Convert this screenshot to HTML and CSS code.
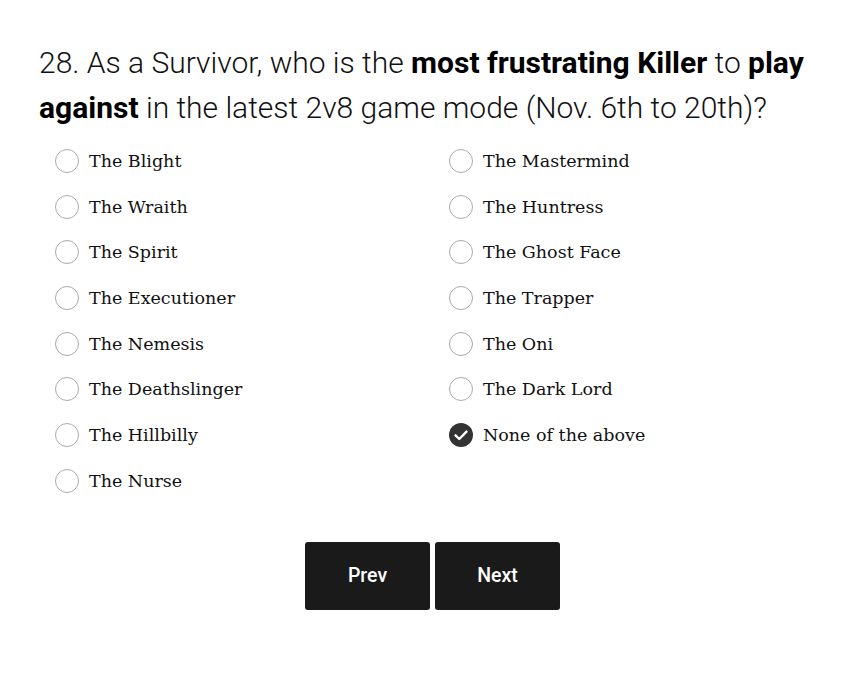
FILE: index.html
```html
<!DOCTYPE html>
<html>
<head>
<meta charset="utf-8">
<link rel="stylesheet" href="styles.css">
</head>
<body>
<div class="page">
  <h1 class="question">28. As a Survivor, who is the <b>most frustrating Killer</b> to <b>play against</b> in the latest 2v8 game mode (Nov. 6th to 20th)?</h1>
  <div class="options">
    <div class="col">
      <label class="opt"><span class="radio"></span><span class="txt">The Blight</span></label>
      <label class="opt"><span class="radio"></span><span class="txt">The Wraith</span></label>
      <label class="opt"><span class="radio"></span><span class="txt">The Spirit</span></label>
      <label class="opt"><span class="radio"></span><span class="txt">The Executioner</span></label>
      <label class="opt"><span class="radio"></span><span class="txt">The Nemesis</span></label>
      <label class="opt"><span class="radio"></span><span class="txt">The Deathslinger</span></label>
      <label class="opt"><span class="radio"></span><span class="txt">The Hillbilly</span></label>
      <label class="opt"><span class="radio"></span><span class="txt">The Nurse</span></label>
    </div>
    <div class="col">
      <label class="opt"><span class="radio"></span><span class="txt">The Mastermind</span></label>
      <label class="opt"><span class="radio"></span><span class="txt">The Huntress</span></label>
      <label class="opt"><span class="radio"></span><span class="txt">The Ghost Face</span></label>
      <label class="opt"><span class="radio"></span><span class="txt">The Trapper</span></label>
      <label class="opt"><span class="radio"></span><span class="txt">The Oni</span></label>
      <label class="opt"><span class="radio"></span><span class="txt">The Dark Lord</span></label>
      <label class="opt"><span class="radio checked"><svg viewBox="0 0 24 24" width="24" height="24"><circle cx="12" cy="12" r="12" fill="#333"/><path d="M6.5 12.3 L10.3 16 L17.5 8.6" fill="none" stroke="#fff" stroke-width="2.4" stroke-linecap="round" stroke-linejoin="round"/></svg></span><span class="txt">None of the above</span></label>
    </div>
  </div>
  <div class="nav">
    <button class="btn">Prev</button>
    <button class="btn">Next</button>
  </div>
</div>
</body>
</html>
```

FILE: styles.css
```css
html, body {
  margin: 0;
  padding: 0;
  background: #fff;
}
.page {
  padding: 40px 30px 0 39px;
}
.question {
  margin: 0;
  font-family: Roboto, "Liberation Sans", sans-serif;
  font-weight: 300;
  font-size: 30px;
  line-height: 45px;
  color: #111;
  letter-spacing: 0;
}
.question b {
  font-weight: 700;
  color: #000;
}
.options {
  display: grid;
  grid-template-columns: 394px 394px;
  padding-left: 16px;
  margin-top: 8px;
}
.col {
  display: flex;
  flex-direction: column;
}
.opt {
  display: flex;
  align-items: center;
  height: 45.7px;
  gap: 10px;
}
.radio {
  width: 24px;
  height: 24px;
  box-sizing: border-box;
  border: 1px solid #aaa;
  border-radius: 50%;
  flex: none;
}
.radio.checked {
  border: none;
}
.radio.checked svg {
  display: block;
}
.txt {
  font-family: "DejaVu Serif", "Liberation Serif", serif;
  font-size: 17.5px;
  color: #111;
}
.nav {
  display: flex;
  justify-content: center;
  gap: 5px;
  margin-top: 38px;
  padding-right: 5px;
}
.btn {
  width: 125px;
  height: 68px;
  background: #1a1a1a;
  color: #fff;
  border: none;
  border-radius: 3px;
  box-shadow: 0 3px 0 #e6e6e6;
  font-family: Roboto, "Liberation Sans", sans-serif;
  font-weight: 500;
  font-size: 19.5px;
}
```
